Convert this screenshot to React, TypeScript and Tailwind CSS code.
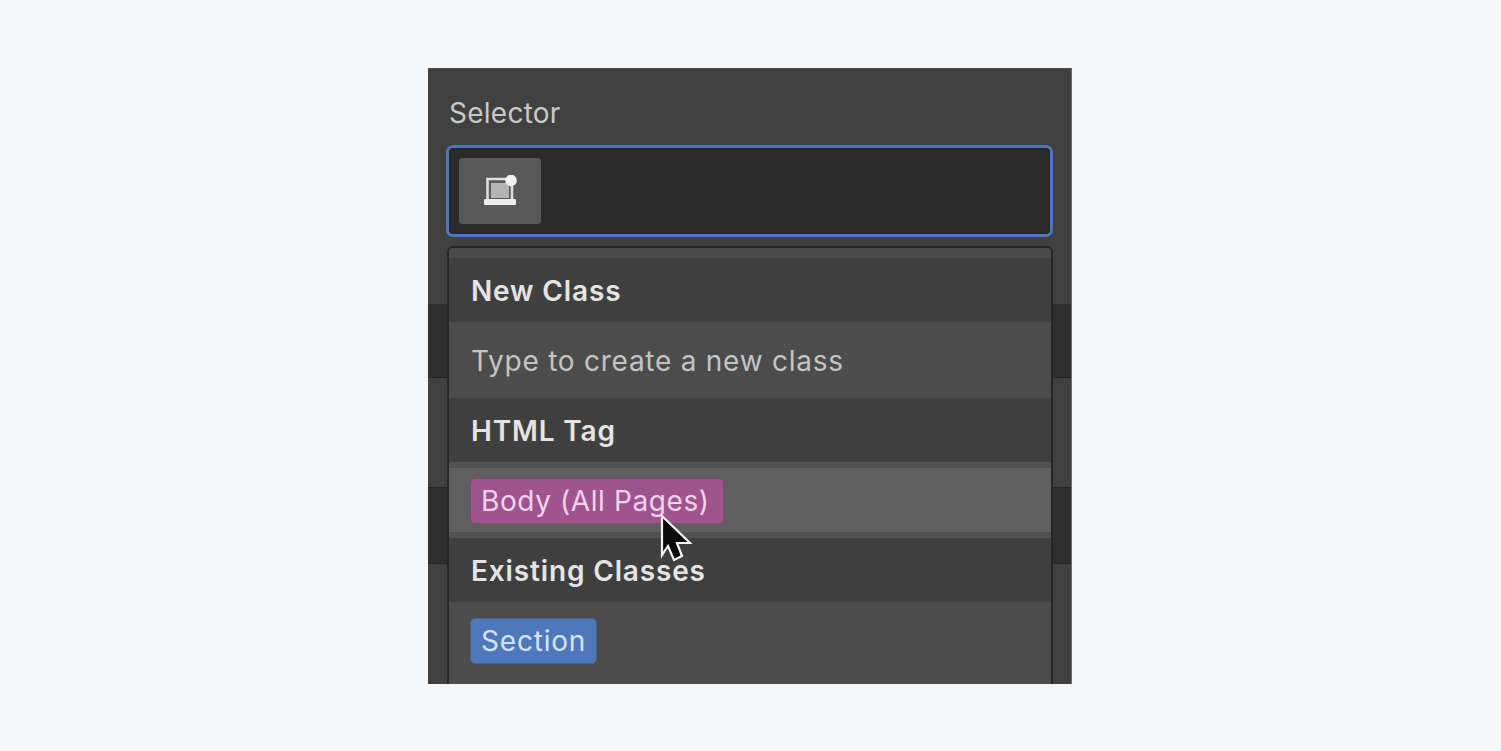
import React from 'react';

const SectionHeader = ({ label }: { label: string }) => (
  <div className="h-[64px] flex items-center px-[22px] pt-[2px] bg-[#3f3f3f] font-semibold text-[28px] tracking-[0.85px] text-[#e4e4e4]">
    {label}
  </div>
);

const Gutter = () => (
  <div className="flex flex-col flex-1">
    <div className="h-[58px] shrink-0" />
    <div className="h-[74px] shrink-0 bg-[#2f2f2f] border-b border-[#262626]" />
    <div className="h-[109px] shrink-0" />
    <div className="h-[77px] shrink-0 bg-[#2f2f2f] border-y border-[#262626]" />
    <div className="flex-1" />
  </div>
);

const TagIcon = () => (
  <svg width="36" height="32" viewBox="0 0 36 32" fill="none">
    <path d="M5.5 24V4H24" stroke="#dedede" strokeWidth="2.6" />
    <path d="M30 11V24" stroke="#dedede" strokeWidth="2.6" />
    <rect x="9" y="8" width="18" height="15" fill="#b4b4b4" />
    <rect x="2" y="24" width="32" height="6" rx="1" fill="#ececec" />
    <circle cx="29" cy="5.5" r="5.8" fill="#f2f2f2" />
  </svg>
);

const Cursor = () => (
  <svg className="absolute left-[209px] top-[44px]" width="36" height="52" viewBox="0 0 36 52" fill="none">
    <path
      d="M4 4V43L10 34L16 48L24 44L19 31H32Z"
      fill="#0b0b0b"
      stroke="#f4f4f4"
      strokeWidth="2.2"
      strokeLinejoin="miter"
    />
  </svg>
);

export default function App() {
  return (
    <div className="w-full h-[751px] bg-[#f5f6f8] overflow-hidden pt-[68px] flex justify-center font-['Inter',sans-serif]">
      <div className="w-[644px] h-[616px] ml-[-1px] flex flex-col bg-[#404040] border-r border-[#6f6f6f] border-t-[1px] border-t-[#4a4a4a]">
        <div className="h-[76px] shrink-0 flex items-end pl-[21px] pb-[15px] text-[28px] leading-[34px] tracking-[0.25px] text-[#c9c9c9]">
          Selector
        </div>

        <div className="mx-[18px] h-[92px] shrink-0 rounded-[7px] border-[3px] border-[#4f76b8] bg-[#2b2b2b] pl-[10px] pt-[10px] shadow-[inset_0_0_0_1px_#1f2735]">
          <div className="w-[82px] h-[66px] rounded-[4px] bg-[#595959] flex items-center justify-center">
            <TagIcon />
          </div>
        </div>

        <div className="flex flex-1 mt-[9px] min-h-0">
          <div className="w-[19px] flex"><Gutter /></div>

          <div className="flex-1 flex flex-col rounded-t-[6px] border-x-[2px] border-t-[2px] border-[#262626] overflow-hidden">
            <div className="h-[10px] shrink-0 bg-[#4a4a4a]" />
            <SectionHeader label="New Class" />
            <div className="h-[76px] flex items-center px-[22px] pt-[2px] bg-[#4c4c4c] text-[28px] tracking-[0.75px] text-[#c4c4c4]">
              Type to create a new class
            </div>
            <SectionHeader label="HTML Tag" />
            <div className="h-[76px] relative flex items-center px-[22px] bg-[#5f5f5f] border-y-[6px] border-[#515151]">
              <span className="h-[46px] mt-[1px] -ml-[1px] pl-[10px] pr-[13px] pt-[1px] flex items-center rounded-[5px] bg-[#a0548e] border border-[#7c4a70] text-[28px] tracking-[0.6px] text-[#f0d2ea]">
                Body (All Pages)
              </span>
              <Cursor />
            </div>
            <SectionHeader label="Existing Classes" />
            <div className="flex-1 bg-[#4c4c4c] px-[22px] pt-[16px]">
              <span className="inline-flex h-[46px] -ml-[1px] pl-[10px] pr-[10px] items-center rounded-[5px] bg-[#4f77bb] border border-[#44628f] text-[28px] tracking-[0.8px] text-[#d6e4fa]">
                Section
              </span>
            </div>
          </div>

          <div className="w-[18px] flex"><Gutter /></div>
        </div>
      </div>
    </div>
  );
}
